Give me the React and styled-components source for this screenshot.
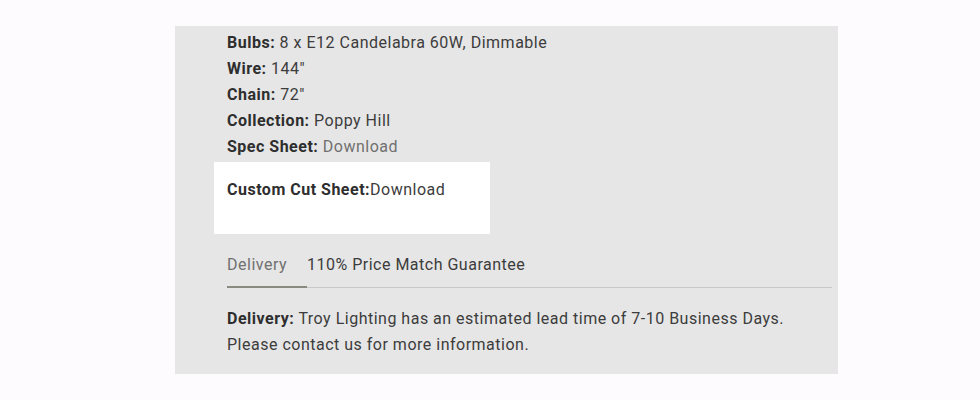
import React from 'react';
import styled, { createGlobalStyle } from 'styled-components';

const GlobalStyle = createGlobalStyle`
  body {
    margin: 0;
    background: #fdfbfe;
    font-family: Roboto, "Liberation Sans", sans-serif;
  }
`;

const Panel = styled.section`
  margin: 26px 0 0 175px;
  width: 663px;
  height: 348px;
  box-sizing: border-box;
  background: #e6e6e6;
  padding: 4px 6px 0 52px;
  color: #3c3c3c;
  font-size: 16px;
  letter-spacing: 0.5px;
`;

const SpecList = styled.ul`
  list-style: none;
  margin: 0;
  padding: 0;
`;

const SpecRow = styled.li`
  line-height: 26px;
`;

const Label = styled.strong`
  font-weight: 700;
  color: #2e2e2e;
`;

const Link = styled.a`
  color: ${p => (p.$muted ? '#707070' : '#3c3c3c')};
  text-decoration: none;
`;

const CutSheet = styled.div`
  margin: 2px 0 0 -13px;
  width: 276px;
  height: 72px;
  box-sizing: border-box;
  background: #fff;
  padding: 15px 13px 0;
  line-height: 26px;
`;

const Tabs = styled.div`
  display: flex;
  margin-top: 19px;
  border-bottom: 1px solid #c8c8c8;
`;

const Tab = styled.div`
  box-sizing: border-box;
  padding: 2px 0 11px;
  line-height: 20px;
  color: ${p => (p.$active ? '#707070' : '#3c3c3c')};
  border-bottom: 2px solid ${p => (p.$active ? '#8a8a82' : 'transparent')};
  margin-bottom: -1px;
  width: ${p => (p.$active ? '80px' : 'auto')};
`;

const Note = styled.p`
  margin: 18px 0 0;
  line-height: 26px;
`;

export default function App() {
  const specs = [
    ['Bulbs:', '8 x E12 Candelabra 60W, Dimmable'],
    ['Wire:', '144"'],
    ['Chain:', '72"'],
    ['Collection:', 'Poppy Hill'],
  ];
  return (
    <>
      <GlobalStyle />
      <Panel>
        <SpecList>
          {specs.map(([k, v]) => (
            <SpecRow key={k}>
              <Label>{k}</Label> {v}
            </SpecRow>
          ))}
          <SpecRow>
            <Label>Spec Sheet:</Label> <Link $muted href="#">Download</Link>
          </SpecRow>
        </SpecList>
        <CutSheet>
          <Label>Custom Cut Sheet:</Label><Link href="#">Download</Link>
        </CutSheet>
        <Tabs>
          <Tab $active>Delivery</Tab>
          <Tab>110% Price Match Guarantee</Tab>
        </Tabs>
        <Note>
          <Label>Delivery:</Label> Troy Lighting has an estimated lead time of 7-10 Business Days.
          <br />
          Please contact us for more information.
        </Note>
      </Panel>
    </>
  );
}
